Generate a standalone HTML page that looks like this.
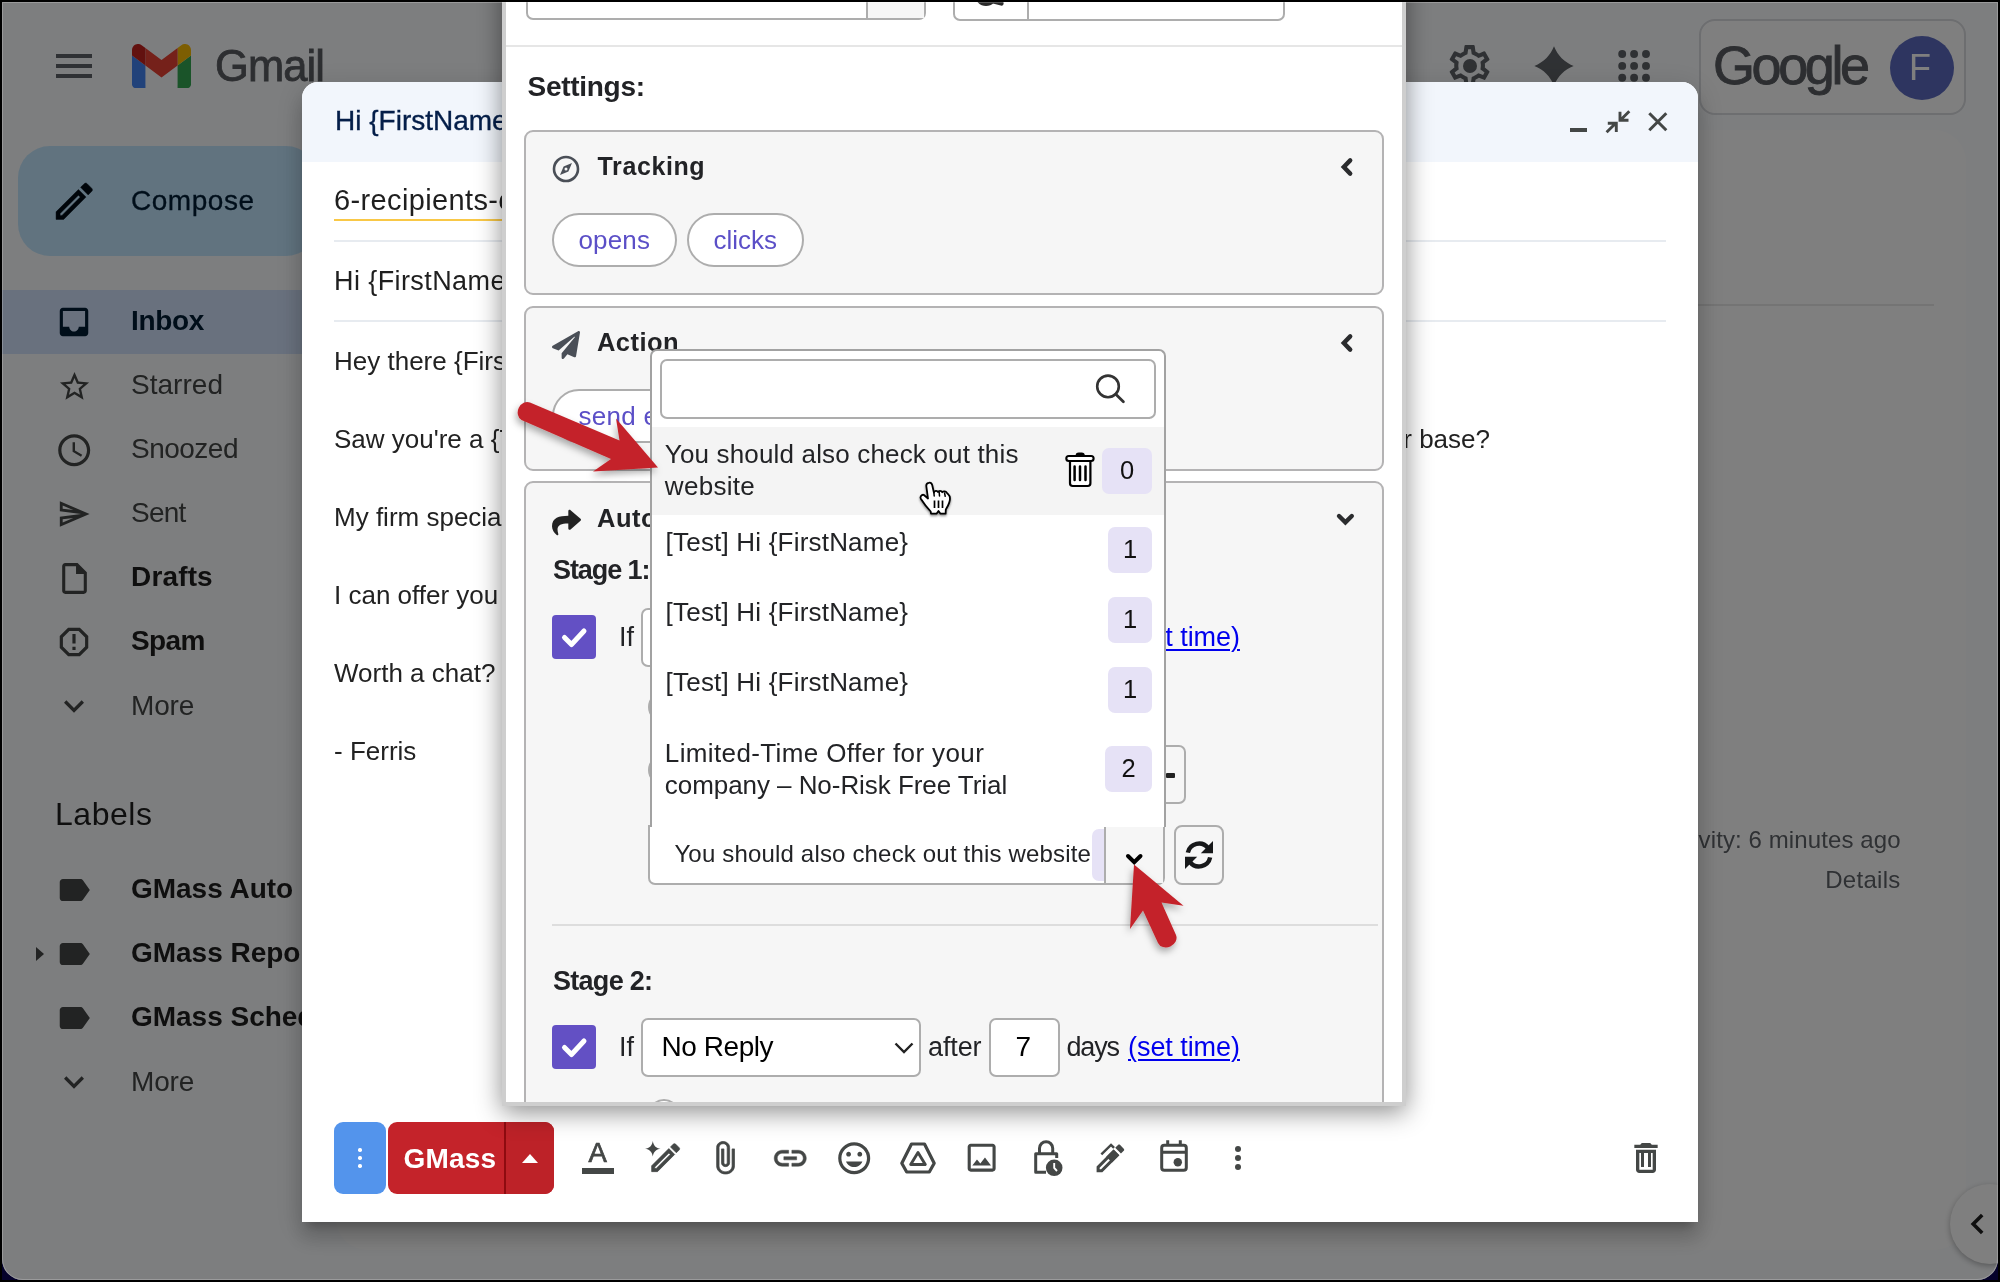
<!DOCTYPE html>
<html lang="en"><head><meta charset="utf-8"><title>Gmail - GMass settings</title>
<style>
*{box-sizing:border-box;margin:0;padding:0}
html,body{width:2000px;height:1282px;overflow:hidden;background:#000}
body{font-family:"Liberation Sans",sans-serif;position:relative;-webkit-font-smoothing:antialiased}
#frame{position:absolute;left:2px;top:2px;width:1996px;height:1278px;background:#05022b;overflow:hidden}
#win{position:absolute;left:0;top:0;width:1996px;height:1278px;border-radius:0 0 21px 21px;overflow:hidden;background:#fbfcfe}
#shift{position:absolute;left:-2px;top:-2px;width:2000px;height:1282px;will-change:transform}
#gmail{position:absolute;left:0;top:0;width:2000px;height:1282px}
#scrim{position:absolute;left:0;top:0;width:2000px;height:1282px;background:rgba(0,0,0,.5)}
#edge{position:absolute;left:0;top:0;width:1996px;height:1278px;border-radius:0 0 21px 21px;border:1px solid rgba(255,255,255,.22);pointer-events:none}
</style></head>
<body>
<div id="frame"><div id="win"><div id="shift">
<div id="gmail">
<div style="position:absolute;left:56px;top:54px;width:36px;height:4px;background:#5f6368"></div>
<div style="position:absolute;left:56px;top:64px;width:36px;height:4px;background:#5f6368"></div>
<div style="position:absolute;left:56px;top:74px;width:36px;height:4px;background:#5f6368"></div>
<svg style="position:absolute;left:132px;top:44px;" width="59" height="44.25" viewBox="52 42 88 66"><path fill="#4285f4" d="M58 108h14V74L52 59v43c0 3.32 2.69 6 6 6"/><path fill="#34a853" d="M120 108h14c3.32 0 6-2.69 6-6V59l-20 15"/><path fill="#fbbc04" d="M120 48v26l20-15v-8c0-7.42-8.47-11.65-14.4-7.2"/><path fill="#ea4335" d="M72 74V48l24 18 24-18v26L96 92"/><path fill="#c5221f" d="M52 51v8l20 15V48l-5.6-4.2c-5.94-4.45-14.4-.22-14.4 7.2"/></svg>
<div style="position:absolute;left:215px;top:44.78px;font-size:43.5px;line-height:43.5px;white-space:nowrap;color:#5a5d62;letter-spacing:-0.899px;-webkit-text-stroke:0.8px #5a5d62;">Gmail</div>
<div style="position:absolute;left:18px;top:146px;width:300px;height:110px;background:#c2e7ff;border-radius:32px"></div>
<svg style="position:absolute;left:49.95px;top:177.35px;stroke:#000a14;stroke-width:0.22px;" width="48.5" height="48.5" viewBox="0 0 24 24"><path fill="#000a14" d="M14.06 9.02l.92.92L5.92 19H5v-.92l9.06-9.06M17.66 3c-.25 0-.51.1-.7.29l-1.83 1.83 3.75 3.75 1.83-1.83c.39-.39.39-1.02 0-1.41l-2.34-2.34c-.2-.2-.45-.29-.71-.29zm-3.6 3.19L3 17.25V21h3.75L17.81 9.94l-3.75-3.75z"/></svg>
<div style="position:absolute;left:131px;top:186.80px;font-size:28px;line-height:28px;white-space:nowrap;color:#001d35;letter-spacing:0.527px;-webkit-text-stroke:0.3px #001d35;">Compose</div>
<div style="position:absolute;left:0px;top:290px;width:320px;height:64px;background:#d3e3fd"></div>
<svg style="position:absolute;left:55.0px;top:303.0px;" width="38" height="38" viewBox="0 0 24 24"><path fill="#001d35" d="M19 3H4.99c-1.11 0-1.98.89-1.98 2L3 19c0 1.1.88 2 1.99 2H19c1.1 0 2-.9 2-2V5c0-1.11-.9-2-2-2zm0 12h-4c0 1.66-1.35 3-3 3s-3-1.34-3-3H4.99V5H19v10z"/></svg>
<div style="position:absolute;left:131px;top:306.80px;font-size:28px;line-height:28px;white-space:nowrap;color:#001d35;font-weight:bold;letter-spacing:-0.316px;">Inbox</div>
<svg style="position:absolute;left:56.5px;top:368.5px;" width="35" height="35" viewBox="0 0 24 24"><path fill="#444746" d="M22 9.24l-7.19-.62L12 2 9.19 8.63 2 9.24l5.46 4.73L5.82 21 12 17.27 18.18 21l-1.63-7.03L22 9.24zM12 15.4l-3.76 2.27 1-4.28-3.32-2.88 4.38-.38L12 6.1l1.71 4.04 4.38.38-3.32 2.88 1 4.28L12 15.4z"/></svg>
<div style="position:absolute;left:131px;top:370.80px;font-size:28px;line-height:28px;white-space:nowrap;color:#444746;letter-spacing:0.029px;">Starred</div>
<svg style="position:absolute;left:54.8px;top:430.8px;" width="38.4" height="38.4" viewBox="0 0 24 24"><path fill="#444746" d="M11.99 2C6.47 2 2 6.48 2 12s4.47 10 9.99 10C17.52 22 22 17.52 22 12S17.52 2 11.99 2zM12 20c-4.42 0-8-3.58-8-8s3.58-8 8-8 8 3.58 8 8-3.58 8-8 8zm.5-13H11v6l5.25 3.15.75-1.23-4.5-2.67z"/></svg>
<div style="position:absolute;left:131px;top:434.80px;font-size:28px;line-height:28px;white-space:nowrap;color:#444746;letter-spacing:-0.507px;">Snoozed</div>
<svg style="position:absolute;left:57.0px;top:497.0px;" width="34" height="34" viewBox="0 0 24 24"><path fill="#444746" d="M4.01 6.03l7.51 3.22-7.52-1 .01-2.22m7.5 8.72L4 17.97v-2.22l7.51-1M2.01 3L2 10l15 2-15 2 .01 7L23 12 2.01 3z"/></svg>
<div style="position:absolute;left:131px;top:498.80px;font-size:28px;line-height:28px;white-space:nowrap;color:#444746;letter-spacing:-0.734px;">Sent</div>
<svg style="position:absolute;left:55.5px;top:559.5px;" width="37" height="37" viewBox="0 0 24 24"><path fill="#444746" d="M14 2H6c-1.1 0-1.99.9-1.99 2L4 20c0 1.1.89 2 1.99 2H18c1.1 0 2-.9 2-2V8l-6-6zM6 20V4h7v5h5v11H6z"/></svg>
<div style="position:absolute;left:131px;top:562.80px;font-size:28px;line-height:28px;white-space:nowrap;color:#1f1f1f;font-weight:bold;letter-spacing:0.157px;">Drafts</div>
<svg style="position:absolute;left:55.0px;top:623.0px;" width="38" height="38" viewBox="0 0 24 24"><path fill="#444746" d="M15.73 3H8.27L3 8.27v7.46L8.27 21h7.46L21 15.73V8.27L15.73 3zM19 14.9L14.9 19H9.1L5 14.9V9.1L9.1 5h5.8L19 9.1v5.8zM11 7h2v6h-2zm0 8h2v2h-2z"/></svg>
<div style="position:absolute;left:131px;top:626.80px;font-size:28px;line-height:28px;white-space:nowrap;color:#1f1f1f;font-weight:bold;letter-spacing:-0.583px;">Spam</div>
<svg style="position:absolute;left:54.0px;top:686.0px;" width="40" height="40" viewBox="0 0 24 24"><path fill="#444746" d="M16.59 8.59L12 13.17 7.41 8.59 6 10l6 6 6-6z"/></svg>
<div style="position:absolute;left:131px;top:692.00px;font-size:28px;line-height:28px;white-space:nowrap;color:#444746;letter-spacing:-0.165px;">More</div>
<div style="position:absolute;left:55px;top:797.91px;font-size:32px;line-height:32px;white-space:nowrap;color:#1f1f1f;letter-spacing:0.540px;">Labels</div>
<svg style="position:absolute;left:54.5px;top:870.9px;" width="38" height="38" viewBox="0 0 24 24"><path fill="#444746" d="M17.63 5.84C17.27 5.33 16.67 5 16 5L5 5.01C3.9 5.01 3 5.9 3 7v10c0 1.1.9 1.99 2 1.99L16 19c.67 0 1.27-.33 1.63-.84L22 12l-4.37-6.16z"/></svg>
<div style="position:absolute;left:131px;top:874.70px;font-size:28px;line-height:28px;white-space:nowrap;color:#1f1f1f;font-weight:bold;letter-spacing:-0.02px;">GMass Auto Followup</div>
<svg style="position:absolute;left:54.5px;top:934.9px;" width="38" height="38" viewBox="0 0 24 24"><path fill="#444746" d="M17.63 5.84C17.27 5.33 16.67 5 16 5L5 5.01C3.9 5.01 3 5.9 3 7v10c0 1.1.9 1.99 2 1.99L16 19c.67 0 1.27-.33 1.63-.84L22 12l-4.37-6.16z"/></svg>
<div style="position:absolute;left:131px;top:938.70px;font-size:28px;line-height:28px;white-space:nowrap;color:#1f1f1f;font-weight:bold;letter-spacing:-0.02px;">GMass Reports</div>
<svg style="position:absolute;left:54.5px;top:999.0999999999999px;" width="38" height="38" viewBox="0 0 24 24"><path fill="#444746" d="M17.63 5.84C17.27 5.33 16.67 5 16 5L5 5.01C3.9 5.01 3 5.9 3 7v10c0 1.1.9 1.99 2 1.99L16 19c.67 0 1.27-.33 1.63-.84L22 12l-4.37-6.16z"/></svg>
<div style="position:absolute;left:131px;top:1002.90px;font-size:28px;line-height:28px;white-space:nowrap;color:#1f1f1f;font-weight:bold;letter-spacing:-0.02px;">GMass Scheduled</div>
<svg style="position:absolute;left:34px;top:946px;" width="12" height="16" viewBox="0 0 12 16"><path fill="#444746" d="M2 1l8 7-8 7z"/></svg>
<svg style="position:absolute;left:54.0px;top:1061.5px;" width="40" height="40" viewBox="0 0 24 24"><path fill="#444746" d="M16.59 8.59L12 13.17 7.41 8.59 6 10l6 6 6-6z"/></svg>
<div style="position:absolute;left:131px;top:1068.10px;font-size:28px;line-height:28px;white-space:nowrap;color:#444746;letter-spacing:-0.165px;">More</div>
<div style="position:absolute;left:336px;top:130px;width:1630px;height:1120px;background:#ffffff;border-radius:32px"></div>
<div style="position:absolute;left:1600px;top:304px;width:334px;height:2px;background:#e8e8e8"></div>
<div style="position:absolute;right:99.4px;top:827.88px;font-size:24px;line-height:24px;white-space:nowrap;color:#5f6368;letter-spacing:0.1px;">Last account activity: 6 minutes ago</div>
<div style="position:absolute;right:99.4px;top:867.88px;font-size:24px;line-height:24px;white-space:nowrap;color:#5f6368;letter-spacing:0.3px;">Details</div>
<svg style="position:absolute;left:1445.4px;top:41.199999999999996px;" width="49.2" height="49.2" viewBox="0 0 24 24"><path fill="#5f6368" d="M19.43 12.98c.04-.32.07-.64.07-.98 0-.34-.03-.66-.07-.98l2.11-1.65c.19-.15.24-.42.12-.64l-2-3.46c-.09-.16-.26-.25-.44-.25-.06 0-.12.01-.17.03l-2.49 1c-.52-.4-1.08-.73-1.69-.98l-.38-2.65C14.46 2.18 14.25 2 14 2h-4c-.25 0-.46.18-.49.42l-.38 2.65c-.61.25-1.17.59-1.69.98l-2.49-1c-.06-.02-.12-.03-.18-.03-.17 0-.34.09-.43.25l-2 3.46c-.13.22-.07.49.12.64l2.11 1.65c-.04.32-.07.65-.07.98 0 .33.03.66.07.98l-2.11 1.65c-.19.15-.24.42-.12.64l2 3.46c.09.16.26.25.44.25.06 0 .12-.01.17-.03l2.49-1c.52.4 1.08.73 1.69.98l.38 2.65c.03.24.24.42.49.42h4c.25 0 .46-.18.49-.42l.38-2.65c.61-.25 1.17-.59 1.69-.98l2.49 1c.06.02.12.03.18.03.17 0 .34-.09.43-.25l2-3.46c.12-.22.07-.49-.12-.64l-2.11-1.65zm-1.98-1.71c.04.31.05.52.05.73 0 .21-.02.43-.05.73l-.14 1.13.89.7 1.08.84-.7 1.21-1.27-.51-1.04-.42-.9.68c-.43.32-.84.56-1.25.73l-1.06.43-.16 1.13-.2 1.35h-1.4l-.19-1.35-.16-1.13-1.06-.43c-.43-.18-.83-.41-1.23-.71l-.91-.7-1.06.43-1.27.51-.7-1.21 1.08-.84.89-.7-.14-1.13c-.03-.31-.05-.54-.05-.74s.02-.43.05-.73l.14-1.13-.89-.7-1.08-.84.7-1.21 1.27.51 1.04.42.9-.68c.43-.32.84-.56 1.25-.73l1.06-.43.16-1.13.2-1.35h1.39l.19 1.35.16 1.13 1.06.43c.43.18.83.41 1.23.71l.91.7 1.06-.43 1.27-.51.7 1.21-1.07.85-.89.7.14 1.13z"/></svg>
<svg style="position:absolute;left:1463px;top:58.8px;" width="14" height="14" viewBox="0 0 14 14"><circle cx="7" cy="7" r="7" fill="#5f6368"/></svg>
<svg style="position:absolute;left:1534.2px;top:46px;" width="40" height="40" viewBox="0 0 24 24"><path fill="#5f6368" d="M12 0.200C14.200 5.800 18.200 9.800 23.800 12 18.200 14.200 14.200 18.200 12 23.800 9.800 18.200 5.800 14.200 0.200 12 5.800 9.800 9.800 5.800 12 0.200z"/></svg>
<svg style="position:absolute;left:1610px;top:42px;" width="48" height="48" viewBox="1610 42 48 48"><circle cx="1622.2" cy="54" r="3.950" fill="#5f6368"/><circle cx="1622.2" cy="65.9" r="3.950" fill="#5f6368"/><circle cx="1622.2" cy="77.8" r="3.950" fill="#5f6368"/><circle cx="1634.1" cy="54" r="3.950" fill="#5f6368"/><circle cx="1634.1" cy="65.9" r="3.950" fill="#5f6368"/><circle cx="1634.1" cy="77.8" r="3.950" fill="#5f6368"/><circle cx="1646" cy="54" r="3.950" fill="#5f6368"/><circle cx="1646" cy="65.9" r="3.950" fill="#5f6368"/><circle cx="1646" cy="77.8" r="3.950" fill="#5f6368"/></svg>
<div style="position:absolute;left:1699px;top:19px;width:267px;height:95.5px;border:2px solid #dadce0;border-radius:16px;background:#fff"></div>
<div style="position:absolute;left:1713px;top:38.49px;font-size:54px;line-height:54px;white-space:nowrap;color:#5a5d62;letter-spacing:-3.427px;-webkit-text-stroke:0.9px #5a5d62;">Google</div>
<div style="position:absolute;left:1890px;top:35.7px;width:64px;height:64px;background:#5c6bc0;border-radius:50%"></div>
<div style="position:absolute;left:1909px;top:49.53px;font-size:36px;line-height:36px;white-space:nowrap;color:#ffffff;">F</div>
<div style="position:absolute;left:1950px;top:1184px;width:80px;height:80px;background:#fff;border-radius:50%;box-shadow:0 2px 6px rgba(0,0,0,.3)"></div>
<svg style="position:absolute;left:1968px;top:1212px;" width="20" height="24" viewBox="0 0 20 24"><path d="M14.200 3L5.200 12l9 9" fill="none" stroke="#1f1f1f" stroke-width="3.600"/></svg>
</div>
<div id="scrim"></div>
<div style="position:absolute;left:302px;top:82px;width:1396px;height:1140px;background:#fff;border-radius:16px 16px 0 0;box-shadow:0 16px 20px 2px rgba(0,0,0,.14),0 6px 28px 4px rgba(0,0,0,.12),0 10px 10px -6px rgba(0,0,0,.2);overflow:hidden">
<div style="position:absolute;left:0px;top:0px;width:1396px;height:79.5px;background:#f2f6fc"></div>
<div style="position:absolute;left:33px;top:25.30px;font-size:28px;line-height:28px;white-space:nowrap;color:#041e49;-webkit-text-stroke:0.35px #041e49;">Hi {FirstName}</div>
<div style="position:absolute;left:1268px;top:46px;width:17px;height:3.5px;background:#444746"></div>
<svg style="position:absolute;left:1298px;top:22px;" width="76" height="36" viewBox="1600 104 76 36"><path d="M1629.300 111.200L1620.300 120.200M1620 111.800V120.300H1628.500M1606.600 132.300L1615.700 123.300M1616.300 132V123.300H1607.800" fill="none" stroke="#444746" stroke-width="2.900"/><path d="M1649.300 113.300L1666.300 130.300M1666.300 113.300L1649.300 130.300" fill="none" stroke="#444746" stroke-width="3"/></svg>
<div style="position:absolute;left:32px;top:104.25px;font-size:29px;line-height:29px;white-space:nowrap;color:#1f1f1f;letter-spacing:0.37px;">6-recipients-example@gmass.co</div>
<div style="position:absolute;left:32px;top:137.2px;width:260px;height:2px;background:#f9c846"></div>
<div style="position:absolute;left:32px;top:157.9px;width:1332px;height:2px;background:#e7ebf0"></div>
<div style="position:absolute;left:32px;top:185.64px;font-size:27px;line-height:27px;white-space:nowrap;color:#1f1f1f;letter-spacing:0.41px;">Hi {FirstName}</div>
<div style="position:absolute;left:32px;top:237.5px;width:1332px;height:2px;background:#e7ebf0"></div>
<div style="position:absolute;left:32px;top:265.99px;font-size:26px;line-height:26px;white-space:nowrap;color:#222222;">Hey there {FirstName},</div>
<div style="position:absolute;left:32px;top:343.99px;font-size:26px;line-height:26px;white-space:nowrap;color:#222222;">Saw you&#x27;re a {Title} at {Company}.</div>
<div style="position:absolute;left:32px;top:421.99px;font-size:26px;line-height:26px;white-space:nowrap;color:#222222;">My firm specializes in lead gen.</div>
<div style="position:absolute;left:32px;top:499.99px;font-size:26px;line-height:26px;white-space:nowrap;color:#222222;">I can offer you a free trial.</div>
<div style="position:absolute;left:32px;top:577.99px;font-size:26px;line-height:26px;white-space:nowrap;color:#222222;">Worth a chat?</div>
<div style="position:absolute;left:32px;top:655.99px;font-size:26px;line-height:26px;white-space:nowrap;color:#222222;">- Ferris</div>
<div style="position:absolute;right:208px;top:343.99px;font-size:26px;line-height:26px;white-space:nowrap;color:#222222;">customer base?</div>
<div style="position:absolute;left:32px;top:1040px;width:52px;height:72px;background:#5394ec;border-radius:9px"></div>
<div style="position:absolute;left:56.30000000000001px;top:1066.3px;width:3.4px;height:3.4px;background:#fff;border-radius:50%"></div>
<div style="position:absolute;left:56.30000000000001px;top:1074.3px;width:3.4px;height:3.4px;background:#fff;border-radius:50%"></div>
<div style="position:absolute;left:56.30000000000001px;top:1082.3px;width:3.4px;height:3.4px;background:#fff;border-radius:50%"></div>
<div style="position:absolute;left:86px;top:1040px;width:166px;height:72px;background:#c4232a;border-radius:9px"></div>
<div style="position:absolute;left:203px;top:1040px;width:49px;height:72px;background:#bd2228;border-radius:0 9px 9px 0"></div>
<div style="position:absolute;left:202px;top:1040px;width:2px;height:72px;background:#8e0b10"></div>
<div style="position:absolute;left:101.60000000000002px;top:1063.30px;font-size:28px;line-height:28px;white-space:nowrap;color:#fff;font-weight:bold;letter-spacing:0.169px;">GMass</div>
<svg style="position:absolute;left:220px;top:1072px;" width="16" height="9" viewBox="0 0 16 9"><path fill="#fff" d="M8 0l8 9H0z"/></svg>
<div style="position:absolute;left:286.6px;top:1056.72px;font-size:27.5px;line-height:27.5px;white-space:nowrap;color:#444746;-webkit-text-stroke:0.7px #444746;">A</div>
<div style="position:absolute;left:280px;top:1086px;width:32px;height:6px;background:#444746"></div>
<svg style="position:absolute;left:345.29999999999995px;top:1057.3px;" width="37.3" height="37.3" viewBox="0 0 24 24"><path fill="#444746" stroke="#444746" stroke-width="0.45" d="M14.06 9.02l.92.92L5.92 19H5v-.92l9.06-9.06M17.66 3c-.25 0-.51.1-.7.29l-1.83 1.83 3.75 3.750 1.830-1.830c.390-.390.390-1.020 0-1.410l-2.340-2.340c-.200-.200-.450-.290-.710-.290zm-3.600 3.190L3 17.250V21h3.750L17.810 9.940l-3.750-3.750z"/></svg>
<svg style="position:absolute;left:343px;top:1059.2px;" width="15.6" height="15.6" viewBox="0 0 24 24"><path fill="#444746" d="M12 0C12.9 7 17 11.100 24 12 17 12.900 12.900 17 12 24 11.100 17 7 12.900 0 12 7 11.100 11.100 7 12 0z"/></svg>
<svg style="position:absolute;left:405.25px;top:1058.25px;transform:scaleX(1.1);stroke:#444746;stroke-width:0.45px;" width="35.5" height="35.5" viewBox="0 0 24 24"><path fill="#444746" d="M16.5 6v11.5c0 2.21-1.79 4-4 4s-4-1.79-4-4V5c0-1.38 1.12-2.5 2.5-2.5s2.5 1.12 2.5 2.5v10.5c0 .55-.45 1-1 1s-1-.45-1-1V6H10v9.5c0 1.38 1.12 2.5 2.5 2.5s2.5-1.12 2.5-2.5V5c0-2.21-1.79-4-4-4S7 2.790 7 5v12.500c0 3.040 2.460 5.500 5.500 5.500s5.500-2.460 5.500-5.500V6h-1.500z"/></svg>
<svg style="position:absolute;left:468.75px;top:1056.95px;stroke:#444746;stroke-width:0.3px;" width="38.5" height="38.5" viewBox="0 0 24 24"><path fill="#444746" d="M3.9 12c0-1.710 1.390-3.100 3.100-3.100h4V7H7c-2.760 0-5 2.240-5 5s2.240 5 5 5h4v-1.900H7c-1.710 0-3.100-1.390-3.100-3.100zM8 13h8v-2H8v2zm9-6h-4v1.900h4c1.710 0 3.100 1.390 3.100 3.100s-1.390 3.100-3.100 3.100h-4V17h4c2.760 0 5-2.240 5-5s-2.240-5-5-5z"/></svg>
<svg style="position:absolute;left:532.8px;top:1056.6px;" width="38.4" height="38.4" viewBox="0 0 24 24"><path fill="#444746" d="M11.99 2C6.47 2 2 6.48 2 12s4.470 10 9.990 10C17.520 22 22 17.520 22 12S17.520 2 11.990 2zM12 20c-4.420 0-8-3.580-8-8s3.580-8 8-8 8 3.580 8 8-3.580 8-8 8zm3.500-9c.830 0 1.500-.670 1.500-1.500S16.330 8 15.500 8 14 8.670 14 9.500s.670 1.500 1.500 1.500zm-7 0c.830 0 1.500-.670 1.500-1.500S9.330 8 8.500 8 7 8.670 7 9.500 7.670 11 8.500 11zm3.500 6.500c2.330 0 4.310-1.460 5.110-3.500H6.890c.800 2.040 2.780 3.500 5.110 3.500z"/></svg>
<svg style="position:absolute;left:594px;top:1056px;" width="44" height="40" viewBox="896 1138 44 40"><path fill="none" stroke="#444746" stroke-width="3.2" stroke-linejoin="round" d="M911.500 1144H924.500L934.200 1163.300 929.300 1172H906.700L901.800 1163.300Z"/><path fill="none" stroke="#444746" stroke-width="2.900" stroke-linejoin="round" d="M918 1152.600L925.300 1164.500H910.700Z"/></svg>
<svg style="position:absolute;left:661.35px;top:1057.35px;" width="37.3" height="37.3" viewBox="0 0 24 24"><path fill="#444746" d="M19 5v14H5V5h14m0-2H5c-1.100 0-2 .900-2 2v14c0 1.100.900 2 2 2h14c1.100 0 2-.900 2-2V5c0-1.100-.900-2-2-2zm-4.860 8.860l-3 3.870L9 13.140 6 17h12l-3.860-5.140z"/></svg>
<svg style="position:absolute;left:728px;top:1054px;" width="40" height="44" viewBox="1030 1136 40 44"><path fill="none" stroke="#444746" stroke-width="3" d="M1039.500 1153V1148.300a6.600 6.600 0 0 1 13.200 0V1153"/><path fill="none" stroke="#444746" stroke-width="3" stroke-linejoin="round" d="M1046 1172.300H1035.700V1153.700H1056.700V1158"/><circle cx="1054.200" cy="1167.800" r="8.300" fill="#444746"/><path fill="none" stroke="#fff" stroke-width="1.900" d="M1054.200 1163v5l2.800 3"/></svg>
<svg style="position:absolute;left:789.5999999999999px;top:1057.6px;" width="36.8" height="36.8" viewBox="0 0 24 24"><path fill="#444746" d="M14.06 9.02l.92.92L5.92 19H5v-.92l9.06-9.06M17.66 3c-.25 0-.51.1-.7.29l-1.83 1.83 3.75 3.750 1.830-1.830c.390-.390.390-1.020 0-1.410l-2.340-2.340c-.200-.200-.450-.290-.710-.290zm-3.600 3.190L3 17.250V21h3.750L17.810 9.940l-3.750-3.750z"/><path fill="#444746" d="M9.300 10.950L14.060 6.190 17.810 9.940 13.050 14.700z"/><path fill="none" stroke="#444746" stroke-width="1.600" d="M6.100 9.400L12.400 3.200 14.400 5.200"/></svg>
<svg style="position:absolute;left:854px;top:1054px;" width="36" height="40" viewBox="1156 1136 36 40"><rect x="1161.700" y="1145.300" width="24.600" height="25" rx="2.600" fill="none" stroke="#444746" stroke-width="3"/><path d="M1167.700 1140.200V1146M1180.300 1140.200V1146M1162 1152.300H1186" fill="none" stroke="#444746" stroke-width="3"/><circle cx="1177.800" cy="1162.200" r="4.200" fill="#444746"/></svg>
<div style="position:absolute;left:932.7px;top:1063.7px;width:6.6px;height:6.6px;background:#444746;border-radius:50%"></div>
<div style="position:absolute;left:932.7px;top:1072.7px;width:6.6px;height:6.6px;background:#444746;border-radius:50%"></div>
<div style="position:absolute;left:932.7px;top:1081.7px;width:6.6px;height:6.6px;background:#444746;border-radius:50%"></div>
<svg style="position:absolute;left:1324.0px;top:1056.0px;" width="40" height="40" viewBox="0 0 24 24"><path fill="#444746" d="M16 9v10H8V9h8m-1.500-6h-5l-1 1H5v2h14V4h-3.500l-1-1zM18 7H6v12c0 1.100.900 2 2 2h8c1.100 0 2-.900 2-2V7z"/></svg>
<div style="position:absolute;left:1339.4px;top:1068px;width:3px;height:17px;background:#444746"></div>
<div style="position:absolute;left:1345.6px;top:1068px;width:3px;height:17px;background:#444746"></div>
</div>
<div style="position:absolute;left:502px;top:-40px;width:904px;height:1146px;background:#fff;border:4px solid #cecece;box-shadow:0 6px 24px rgba(0,0,0,.45);overflow:hidden">
<div style="position:absolute;left:20px;top:6px;width:399.5px;height:49.5px;background:#fff;border:2px solid #adadad;border-radius:7px;overflow:hidden"></div>
<div style="position:absolute;left:360px;top:8px;width:57.5px;height:45.5px;background:#f6f6f6;border-left:2px solid #adadad"></div>
<div style="position:absolute;left:447px;top:6px;width:332px;height:50.5px;background:#fff;border:2px solid #adadad;border-radius:7px"></div>
<div style="position:absolute;left:520.5px;top:8px;width:2px;height:47px;background:#adadad"></div>
<svg style="position:absolute;left:464px;top:16px;" width="40" height="30" viewBox="970 -20 40 30"><circle cx="986" cy="-5.200" r="9" fill="none" stroke="#2a2a2a" stroke-width="4.200"/><path d="M993.500 1.200L1001.400 3.400" stroke="#2a2a2a" stroke-width="4.600" stroke-linecap="round"/></svg>
<div style="position:absolute;left:555px;top:16.39px;font-size:26px;line-height:26px;white-space:nowrap;color:#5b4fc7;letter-spacing:1.158px;">recent lists</div>
<div style="position:absolute;left:0px;top:80.5px;width:896px;height:2px;background:#e6e6e6"></div>
<div style="position:absolute;left:21.5px;top:108.80px;font-size:28px;line-height:28px;white-space:nowrap;color:#222326;font-weight:bold;letter-spacing:-0.286px;">Settings:</div>
<div style="position:absolute;left:18px;top:166px;width:860px;height:165px;background:#f6f6f6;border:2px solid #b4b3b4;border-radius:9px"></div>
<div style="position:absolute;left:18px;top:342px;width:860px;height:165px;background:#f6f6f6;border:2px solid #b4b3b4;border-radius:9px"></div>
<div style="position:absolute;left:18px;top:517px;width:860px;height:700px;background:#f6f6f6;border:2px solid #b4b3b4;border-radius:9px"></div>
<svg style="position:absolute;left:46px;top:191px;" width="28" height="28" viewBox="0 0 28 28"><circle cx="14" cy="14" r="12" fill="none" stroke="#4a4f57" stroke-width="2.600"/><path fill="#4a4f57" d="M20 8l-3.600 8.400L8 20l3.600-8.400z"/><circle cx="14" cy="14" r="1.500" fill="#f6f6f6"/></svg>
<div style="position:absolute;left:91.60000000000002px;top:190.04px;font-size:25px;line-height:25px;white-space:nowrap;color:#222326;font-weight:bold;letter-spacing:0.597px;">Tracking</div>
<svg style="position:absolute;left:832.5px;top:191.7px;" width="16" height="22" viewBox="0 0 16 22"><path d="M11.200 4.400L4.800 11l6.400 6.600" fill="none" stroke="#2b2c2e" stroke-width="4.400" stroke-linecap="round" stroke-linejoin="miter"/></svg>
<div style="position:absolute;left:46px;top:249px;width:125px;height:53.5px;background:#fff;border:2px solid #adadad;border-radius:30px"></div>
<div style="position:absolute;left:72.39999999999998px;top:262.59px;font-size:26px;line-height:26px;white-space:nowrap;color:#5b4fc7;letter-spacing:0.190px;">opens</div>
<div style="position:absolute;left:181px;top:249px;width:117px;height:53.5px;background:#fff;border:2px solid #adadad;border-radius:30px"></div>
<div style="position:absolute;left:207.60000000000002px;top:262.59px;font-size:26px;line-height:26px;white-space:nowrap;color:#5b4fc7;letter-spacing:-0.011px;">clicks</div>
<svg style="position:absolute;left:46px;top:367px;" width="28" height="28" viewBox="0 0 512 512"><path fill="#4a4f57" d="M476 3.2L12.5 270.6c-18.1 10.4-15.8 35.6 2.2 43.2L121 358.4l287.3-253.2c5.5-4.9 13.300 2.600 8.600 8.300L176 407v80.500c0 23.600 28.500 32.900 42.500 15.800L282 426l124.600 52.200c14.200 6 30.400-2.900 33-18.200l72-432C515 7.800 493.300-6.800 476 3.200z"/></svg>
<div style="position:absolute;left:91px;top:365.61px;font-size:25.5px;line-height:25.5px;white-space:nowrap;color:#222326;font-weight:bold;letter-spacing:0.434px;">Action</div>
<svg style="position:absolute;left:832.5px;top:367.7px;" width="16" height="22" viewBox="0 0 16 22"><path d="M11.200 4.400L4.800 11l6.400 6.600" fill="none" stroke="#2b2c2e" stroke-width="4.400" stroke-linecap="round" stroke-linejoin="miter"/></svg>
<div style="position:absolute;left:46px;top:425px;width:300px;height:53.5px;background:#fff;border:2px solid #adadad;border-radius:30px"></div>
<div style="position:absolute;left:72.39999999999998px;top:438.59px;font-size:26px;line-height:26px;white-space:nowrap;color:#5b4fc7;letter-spacing:0.300px;">send emails</div>
<svg style="position:absolute;left:46px;top:544px;" width="29" height="29" viewBox="0 0 512 512"><path fill="#222" d="M503.691 189.836L327.687 37.851C312.281 24.546 288 35.347 288 56.015v80.053C127.371 137.907 0 170.1 0 322.326c0 61.441 39.581 122.309 83.333 154.132 13.653 9.931 33.111-2.533 28.077-18.631C66.066 312.814 132.917 274.316 288 272.085V360c0 20.7 24.3 31.453 39.687 18.164l176.004-152c11.071-9.562 11.086-26.753 0-36.328z"/></svg>
<div style="position:absolute;left:91px;top:542.11px;font-size:25.5px;line-height:25.5px;white-space:nowrap;color:#222326;font-weight:bold;letter-spacing:0.500px;">Auto Follow-up</div>
<svg style="position:absolute;left:828.4px;top:546.5px;" width="22.8" height="16.4" viewBox="0 0 22.8 16.4"><path d="M5 5L11.4 11.4L17.8 5" fill="none" stroke="#2b2c2e" stroke-width="4.4" stroke-linecap="round" stroke-linejoin="miter"/></svg>
<div style="position:absolute;left:47px;top:592.94px;font-size:27px;line-height:27px;white-space:nowrap;color:#222326;font-weight:bold;letter-spacing:-1.077px;">Stage 1:</div>
<div style="position:absolute;left:46px;top:651px;width:44px;height:44px;background:#6350c4;border-radius:4px"></div><svg style="position:absolute;left:46px;top:651px;" width="44" height="44" viewBox="0 0 44 44"><path d="M12.500 22.500l7 7L32 16" fill="none" stroke="#fff" stroke-width="5" stroke-linecap="round" stroke-linejoin="round"/></svg><div style="position:absolute;left:113px;top:660.14px;font-size:27px;line-height:27px;white-space:nowrap;color:#222326;">If</div><div style="position:absolute;left:135px;top:644px;width:280px;height:58.5px;background:#fff;border:2px solid #adadad;border-radius:7px"></div><div style="position:absolute;left:155.60000000000002px;top:659.30px;font-size:28px;line-height:28px;white-space:nowrap;color:#000;letter-spacing:-0.452px;">No Reply</div><svg style="position:absolute;left:387px;top:667px;" width="22" height="14" viewBox="0 0 22 14"><path d="M2.500 2.500l8.500 8.500 8.500-8.500" fill="none" stroke="#222" stroke-width="2.400"/></svg><div style="position:absolute;left:422px;top:660.14px;font-size:27px;line-height:27px;white-space:nowrap;color:#222326;letter-spacing:-0.107px;">after</div><div style="position:absolute;left:483px;top:644px;width:70.5px;height:58.5px;background:#fff;border:2px solid #adadad;border-radius:7px"></div><div style="position:absolute;left:509.5px;top:659.30px;font-size:28px;line-height:28px;white-space:nowrap;color:#000;">7</div><div style="position:absolute;left:560.4000000000001px;top:660.14px;font-size:27px;line-height:27px;white-space:nowrap;color:#222326;letter-spacing:-1.144px;">days</div><div style="position:absolute;left:622px;top:660.14px;font-size:27px;line-height:27px;white-space:nowrap;color:#0000ee;letter-spacing:-0.057px;text-decoration:underline;text-decoration-thickness:2px;text-underline-offset:3px;">(set time)</div>
<div style="position:absolute;left:142px;top:727px;width:32px;height:32px;background:#fff;border:2px solid #adadad;border-radius:50%"></div>
<div style="position:absolute;left:142px;top:790px;width:32px;height:32px;background:#fff;border:2px solid #adadad;border-radius:50%"></div>
<div style="position:absolute;left:594px;top:781.4px;width:85.5px;height:58.5px;background:#f6f6f6;border:2px solid #adadad;border-radius:7px"></div>
<div style="position:absolute;left:660px;top:808.5px;width:9px;height:5.3px;background:#222;border-radius:1px"></div>
<div style="position:absolute;left:142px;top:861px;width:516.5px;height:59.5px;background:#fff;border:2px solid #adadad;border-top:none;border-radius:0 0 7px 7px;overflow:hidden"></div>
<div style="position:absolute;left:586px;top:865px;width:20px;height:52px;background:#e6e2f6;border-radius:7px"></div>
<div style="position:absolute;left:598px;top:861px;width:58.5px;height:57.5px;background:#f6f6f6;border-left:2px solid #adadad"></div>
<div style="position:absolute;left:168.39999999999998px;top:878.08px;font-size:24px;line-height:24px;white-space:nowrap;color:#222326;letter-spacing:0.174px;">You should also check out this website</div>
<svg style="position:absolute;left:616.55px;top:886.975px;" width="22.5" height="16.25" viewBox="0 0 22.5 16.25"><path d="M5 5L11.25 11.25L17.5 5" fill="none" stroke="#000" stroke-width="4" stroke-linecap="round" stroke-linejoin="miter"/></svg>
<div style="position:absolute;left:668px;top:861px;width:50px;height:60px;background:#f6f6f6;border:2px solid #adadad;border-radius:8px"></div>
<svg style="position:absolute;left:674px;top:872px;" width="38" height="38" viewBox="1180 836 38 38"><path d="M1187.850 852.630A11.400 11.400 0 0 1 1207.980 847.980" fill="none" stroke="#17181a" stroke-width="4.400"/><path d="M1210.150 857.370A11.400 11.400 0 0 1 1190.020 862.020" fill="none" stroke="#17181a" stroke-width="4.400"/><path fill="#17181a" d="M1213 841V853.200H1200.800z"/><path fill="#17181a" d="M1185 869V856.800H1197.200z"/></svg>
<div style="position:absolute;left:46px;top:960px;width:826px;height:2px;background:#dddddd"></div>
<div style="position:absolute;left:47px;top:1003.54px;font-size:27px;line-height:27px;white-space:nowrap;color:#222326;font-weight:bold;letter-spacing:-0.720px;">Stage 2:</div>
<div style="position:absolute;left:46px;top:1061px;width:44px;height:44px;background:#6350c4;border-radius:4px"></div><svg style="position:absolute;left:46px;top:1061px;" width="44" height="44" viewBox="0 0 44 44"><path d="M12.500 22.500l7 7L32 16" fill="none" stroke="#fff" stroke-width="5" stroke-linecap="round" stroke-linejoin="round"/></svg><div style="position:absolute;left:113px;top:1070.14px;font-size:27px;line-height:27px;white-space:nowrap;color:#222326;">If</div><div style="position:absolute;left:135px;top:1054px;width:280px;height:58.5px;background:#fff;border:2px solid #adadad;border-radius:7px"></div><div style="position:absolute;left:155.60000000000002px;top:1069.30px;font-size:28px;line-height:28px;white-space:nowrap;color:#000;letter-spacing:-0.452px;">No Reply</div><svg style="position:absolute;left:387px;top:1077px;" width="22" height="14" viewBox="0 0 22 14"><path d="M2.500 2.500l8.500 8.500 8.500-8.500" fill="none" stroke="#222" stroke-width="2.400"/></svg><div style="position:absolute;left:422px;top:1070.14px;font-size:27px;line-height:27px;white-space:nowrap;color:#222326;letter-spacing:-0.107px;">after</div><div style="position:absolute;left:483px;top:1054px;width:70.5px;height:58.5px;background:#fff;border:2px solid #adadad;border-radius:7px"></div><div style="position:absolute;left:509.5px;top:1069.30px;font-size:28px;line-height:28px;white-space:nowrap;color:#000;">7</div><div style="position:absolute;left:560.4000000000001px;top:1070.14px;font-size:27px;line-height:27px;white-space:nowrap;color:#222326;letter-spacing:-1.144px;">days</div><div style="position:absolute;left:622px;top:1070.14px;font-size:27px;line-height:27px;white-space:nowrap;color:#0000ee;letter-spacing:-0.057px;text-decoration:underline;text-decoration-thickness:2px;text-underline-offset:3px;">(set time)</div>
<div style="position:absolute;left:142px;top:1134.5px;width:32px;height:32px;background:#fff;border:2px solid #adadad;border-radius:50%"></div>
</div>
<div style="position:absolute;left:650px;top:349px;width:516px;height:477.5px;background:#fff;border:2px solid #a2a2a2;border-bottom:none;border-radius:7px 7px 0 0;">
<div style="position:absolute;left:8px;top:8px;width:496px;height:59.5px;background:#fff;border:2px solid #adadad;border-radius:7px"></div>
<svg style="position:absolute;left:442px;top:21px;" width="34" height="34" viewBox="0 0 34 34"><circle cx="14" cy="14.400" r="10.800" fill="none" stroke="#333" stroke-width="2.600"/><path d="M21.800 22.200l7.600 7.600" stroke="#333" stroke-width="2.800" stroke-linecap="round"/></svg>
<div style="position:absolute;left:0px;top:76px;width:512px;height:87.5px;background:#f4f4f4"></div>
<div style="position:absolute;left:12.799999999999955px;top:90.19px;font-size:26px;line-height:26px;white-space:nowrap;color:#222326;letter-spacing:0.164px;">You should also check out this</div>
<div style="position:absolute;left:12.799999999999955px;top:122.19px;font-size:26px;line-height:26px;white-space:nowrap;color:#222326;letter-spacing:0.307px;">website</div>
<svg style="position:absolute;left:410px;top:99px;" width="36" height="40" viewBox="1062 450 36 40"><path d="M1075.600 455.800q0-3.200 3.200-3.200h2.800q3.200 0 3.200 3.200z" fill="#000"/><path d="M1070 461V483.300q0 2.700 2.700 2.700H1087.700q2.700 0 2.700-2.700V461z" fill="#fff" stroke="#000" stroke-width="2.200"/><rect x="1066.300" y="456" width="27.300" height="5" rx="2.500" fill="#fff" stroke="#000" stroke-width="2.100"/><path d="M1074.600 466.500V480M1080 466.500V480M1085.500 466.500V480" stroke="#000" stroke-width="2.500" stroke-linecap="round"/></svg>
<div style="position:absolute;left:450px;top:97px;width:50px;height:46px;background:#e6e2f6;border-radius:7px"></div>
<div style="position:absolute;left:468px;top:106.61px;font-size:25.5px;line-height:25.5px;white-space:nowrap;color:#111;">0</div>
<div style="position:absolute;left:13.600000000000023px;top:178.29px;font-size:26px;line-height:26px;white-space:nowrap;color:#222326;letter-spacing:0.200px;">[Test] Hi {FirstName}</div>
<div style="position:absolute;left:456px;top:175.79999999999995px;width:44px;height:46px;background:#e6e2f6;border-radius:7px"></div>
<div style="position:absolute;left:471px;top:186.21px;font-size:25.5px;line-height:25.5px;white-space:nowrap;color:#111;">1</div>
<div style="position:absolute;left:13.600000000000023px;top:248.29px;font-size:26px;line-height:26px;white-space:nowrap;color:#222326;letter-spacing:0.200px;">[Test] Hi {FirstName}</div>
<div style="position:absolute;left:456px;top:245.79999999999995px;width:44px;height:46px;background:#e6e2f6;border-radius:7px"></div>
<div style="position:absolute;left:471px;top:256.21px;font-size:25.5px;line-height:25.5px;white-space:nowrap;color:#111;">1</div>
<div style="position:absolute;left:13.600000000000023px;top:318.29px;font-size:26px;line-height:26px;white-space:nowrap;color:#222326;letter-spacing:0.200px;">[Test] Hi {FirstName}</div>
<div style="position:absolute;left:456px;top:315.79999999999995px;width:44px;height:46px;background:#e6e2f6;border-radius:7px"></div>
<div style="position:absolute;left:471px;top:326.21px;font-size:25.5px;line-height:25.5px;white-space:nowrap;color:#111;">1</div>
<div style="position:absolute;left:12.799999999999955px;top:388.59px;font-size:26px;line-height:26px;white-space:nowrap;color:#222326;letter-spacing:0.377px;">Limited-Time Offer for your</div>
<div style="position:absolute;left:12.799999999999955px;top:420.59px;font-size:26px;line-height:26px;white-space:nowrap;color:#222326;letter-spacing:-0.055px;">company – No-Risk Free Trial</div>
<div style="position:absolute;left:453px;top:395px;width:47px;height:46px;background:#e6e2f6;border-radius:7px"></div>
<div style="position:absolute;left:469.5px;top:405.21px;font-size:25.5px;line-height:25.5px;white-space:nowrap;color:#111;">2</div>
</div>
<svg style="position:absolute;left:0;top:0;overflow:visible" width="2000" height="1282" viewBox="0 0 2000 1282"><defs><filter id="ds" x="-30%" y="-30%" width="160%" height="160%"><feDropShadow dx="-1.5" dy="4" stdDeviation="3.5" flood-color="#000" flood-opacity="0.32"/></filter></defs><path d="M530 402.500 L619.500 440.500 L616 418.500 L658 467.500 L593 471.500 L611 459 L521.500 420 A8.300 9.750 23.200 0 1 530 402.500 Z" fill="#c4232a" filter="url(#ds)"/><path d="M1134 864.500 L1183.500 905.800 L1161.500 902.500 L1176 935 A8.300 9.850 66 0 1 1158 943 L1143 910.500 L1130 929 Z" fill="#c4232a" filter="url(#ds)"/></svg>
<svg style="position:absolute;left:920px;top:481.500px;overflow:visible" width="34" height="36" viewBox="0 0 34 36"><defs><filter id="cs" x="-30%" y="-30%" width="160%" height="170%"><feDropShadow dx="0" dy="1.500" stdDeviation="1.200" flood-color="#000" flood-opacity="0.45"/></filter></defs><path d="M8.700 0.800 C10.300 0.400 11.700 1.300 12.200 3 L13.900 10.600 C14.600 8.600 17 8.300 18 10 C18.800 8.400 21.300 8.400 22.200 10.200 C23.400 9 25.800 9.200 26.800 10.800 C28.200 12.600 29.800 12.900 30 16 C30.300 20.500 27.600 24.500 25.800 27.500 L25.600 31.700 L20.500 31.700 L18.500 29 L16.500 31.700 L11 31.700 L10.700 29.500 C7 25.500 3.500 21 0.800 16.700 C-0.300 14.800 1.500 12.500 3.600 12.800 L8 16.500 L6.300 4 C6.100 2.400 7.200 1.100 8.700 0.800 Z" fill="#fff" stroke="#000" stroke-width="1.800" stroke-linejoin="round" filter="url(#cs)"/><path d="M14.500 18.500v7.500M18.500 18.500v7.500M22.500 18.500v7.500" stroke="#000" stroke-width="1.700"/><path d="M13.900 10.800L14.200 14M19.200 10.400L19.500 14M24.600 11L25.200 14.300" stroke="#000" stroke-width="1.500" stroke-linecap="round"/></svg>
</div><div id="edge"></div></div></div>
</body></html>
